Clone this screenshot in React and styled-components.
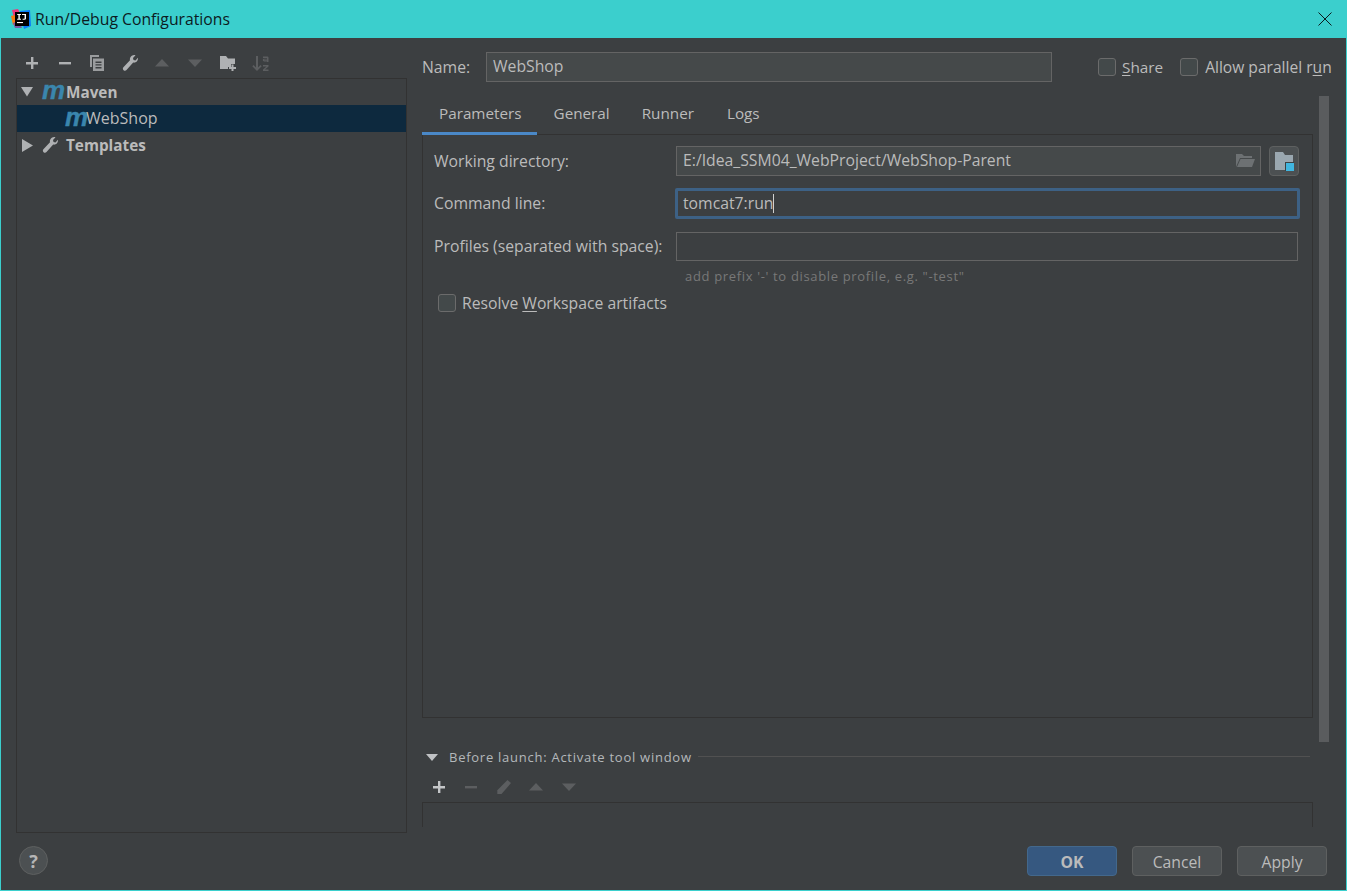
import React from "react";
import styled, { createGlobalStyle } from "styled-components";

const Global = createGlobalStyle`
  html, body { margin: 0; padding: 0; background: #3c3f41; }
  * { box-sizing: border-box; }
  body { font-family: "Open Sans", "Noto Sans", "Liberation Sans", sans-serif; color: #bbbbbb; }
`;

const Win = styled.div`
  width: 1347px; height: 891px; display: flex; flex-direction: column;
  background: #3c3f41; border: 1px solid #3bcfcd; border-top: 0; overflow: hidden;
  font-size: 15.75px; line-height: 20px;
`;
const TitleBar = styled.div`
  height: 38px; flex: none; margin: 0 -1px; padding: 0 15px 0 11px; background: #3bcfcd;
  display: flex; align-items: center; color: #0c1b1f;
`;
const TitleText = styled.span`margin-left: 4px; flex: 1;`;
const Main = styled.div`flex: none; height: 795px; display: flex;`;
const LeftCol = styled.div`width: 391px; margin-left: 15px; flex: none; display: flex; flex-direction: column;`;
const Toolbar = styled.div`
  display: flex; align-items: center; flex: none; height: ${p => p.$h}px;
  padding: ${p => p.$pt || 0}px 0 0 ${p => p.$pl}px; margin-top: ${p => p.$mt || 0}px; gap: ${p => p.$gap}px;
`;
const IconSlot = styled.span`width: 16px; height: 16px; display: block; flex: none; svg { display: block; }`;
const Tree = styled.div`flex: 1; border: 1px solid #323232; display: flex; flex-direction: column;`;
const TreeRow = styled.div`
  height: ${p => p.$h}px; display: flex; align-items: center; flex: none;
  padding-left: ${p => p.$pl}px; padding-bottom: 1px; background: ${p => (p.$sel ? "#0d293e" : "transparent")};
  font-weight: ${p => (p.$bold ? 700 : 400)}; font-size: ${p => (p.$bold ? "15.3px" : "16px")};
`;
const Mvn = styled.span`
  font-family: "Liberation Sans", sans-serif; font-style: italic; font-weight: 700;
  font-size: 26px; line-height: 20px; color: #3a86ad; width: ${p => p.$w}px; flex: none; margin-top: -3px;
  -webkit-text-stroke: 0.4px #3a86ad;
`;
const TreeGap = styled.span`width: ${p => p.$w}px; flex: none;`;
const RightCol = styled.div`width: 907px; margin-left: 15px; flex: none; display: flex; flex-direction: column; position: relative;`;
const NameRow = styled.div`display: flex; align-items: center; height: 30px; margin-top: 14px; flex: none;`;
const NameLabel = styled.span`width: 64px; flex: none; margin-top: -1px;`;
const Input = styled.div`
  height: ${p => p.$h || 29}px; width: ${p => p.$w}px; flex: none;
  background: ${p => (p.$filled ? "#45494a" : "#3c3f41")};
  border: 1px solid #646464; padding: 0 ${p => p.$pr || 6}px 2px 6px;
  display: flex; align-items: center; justify-content: space-between; white-space: nowrap;
`;
const FocusInput = styled.div`
  width: 625px; height: 31px; flex: none; margin-left: -1px; border: 3px solid #3d6185;
  border-radius: 2px; display: flex; align-items: center; padding: 0 0 2px 5px; white-space: nowrap;
`;
const Caret = styled.span`width: 1px; height: 19px; background: #d0d0d0; display: block; margin-top: 2px;`;
const CheckGroup = styled.label`
  display: flex; align-items: center; margin-left: ${p => p.$ml}px; flex: none; font-size: ${p => p.$fs}px;
`;
const Box = styled.span`
  width: 18px; height: 18px; border: 1px solid #6b6b6b; border-radius: 3px; background: #43494a;
  margin-right: ${p => p.$mr || 6}px; flex: none; display: block;
`;
const U = styled.span`text-decoration: underline; text-underline-offset: 2px;`;
const Tabs = styled.div`display: flex; height: 38px; margin-top: 15px; flex: none; font-size: 15.25px;`;
const Tab = styled.div`
  padding: 0 ${p => p.$pr}px 3px ${p => p.$pl}px; height: 38px; display: flex; align-items: center;
  border-bottom: 3px solid ${p => (p.$on ? "#4a88c7" : "transparent")}; z-index: 1;
`;
const Panel = styled.div`
  width: 891px; height: 584px; flex: none; margin-top: -1px; border: 1px solid #323232;
  padding: 11px 13px 0 11px; display: flex; flex-direction: column;
`;
const FieldRow = styled.div`display: flex; align-items: center; height: ${p => p.$h}px; flex: none; margin-top: ${p => p.$mt || 0}px;`;
const FieldLabel = styled.span`width: 242px; flex: none; margin-top: -1px;`;
const BrowseBtn = styled.div`
  width: 30px; height: 30px; margin-left: 8px; flex: none; background: #4c5052;
  border: 1px solid #5e6060; border-radius: 4px; display: flex; align-items: center; justify-content: center;
`;
const Hint = styled.div`margin: 5px 0 0 251px; font-size: 13px; height: 20px; color: #787878; letter-spacing: .66px; flex: none;`;
const ResolveRow = styled.div`display: flex; align-items: center; margin: 7px 0 0 4px; height: 20px; flex: none;`;
const Scrollbar = styled.div`position: absolute; left: 897px; top: 58px; width: 10px; height: 646px; background: #5a5c5e;`;
const LaunchHead = styled.div`display: flex; align-items: center; height: 20px; margin-top: 29px; padding-left: 4px; flex: none;`;
const LaunchText = styled.span`margin-left: 11px; font-size: 13px; letter-spacing: .74px; color: #b4b8bb; flex: none;`;
const Rule = styled.div`flex: none; width: 612px; height: 1px; background: #515151; margin: -2px 0 0 6px;`;
const LaunchBox = styled.div`
  width: 891px; height: 25px; flex: none; margin-top: 1px; border: 1px solid #323232; border-bottom: 0;
`;
const Footer = styled.div`flex: 1; display: flex; align-items: flex-start; padding: 13px 19px 0 18px;`;
const Help = styled.div`
  width: 29px; height: 29px; border-radius: 50%; background: #4c5052; border: 1px solid #5e6060;
  display: flex; align-items: center; justify-content: center; font-weight: 700; font-size: 18px; color: #b6b6b6; flex: none;
`;
const Spacer = styled.div`flex: 1;`;
const Btn = styled.div`
  width: 90px; height: 30px; margin-left: ${p => p.$ml || 0}px; border-radius: 4px; flex: none; padding-top: 1px;
  background: ${p => (p.$primary ? "#365880" : "#4c5052")};
  border: 1px solid ${p => (p.$primary ? "#43688c" : "#5e6060")};
  color: #bbbbbb; font-weight: ${p => (p.$primary ? 700 : 400)};
  display: flex; align-items: center; justify-content: center;
`;
const WrenchInline = styled.span`margin: 0 6px 0 9px; display: block; flex: none; svg { display: block; }`;

const Ic = ({ children, w = 16, h = 16 }) => (
  <IconSlot><svg width={w} height={h} viewBox={`0 0 ${w} ${h}`}>{children}</svg></IconSlot>
);
const Plus = ({ c = "#afb1b3" }) => <Ic><path d="M7 2h2.400v5H14v2.400H9.400V14H7V9.400H2V7h5z" fill={c} /></Ic>;
const Minus = ({ c = "#afb1b3" }) => <Ic><rect x="2" y="7" width="12" height="2.400" fill={c} /></Ic>;
const Up = ({ c = "#5c5e60" }) => <Ic><path d="M8 4l7 7.500H1z" fill={c} /></Ic>;
const Down = ({ c = "#5c5e60" }) => <Ic><path d="M1 4.500h14L8 12z" fill={c} /></Ic>;
const Copy = () => (
  <Ic>
    <path d="M1 0h9v2H3v10H1z" fill="#9a9c9e" />
    <path d="M4 3.500h11V16H4z" fill="#9a9c9e" />
    <path d="M6.500 6.500h6v1.400h-6zM6.500 9.200h6v1.400h-6zM6.500 12h6v1.400h-6z" fill="#3c3f41" />
  </Ic>
);
const Wrench = ({ c = "#afb1b3" }) => (
  <Ic>
    <path d="M16 3.600c0 2.500-2.200 4.500-4.800 4l-6.700 7.500c-.8.800-2 .900-2.900.1-.9-.8-1-2.100-.2-3L8 5.300C7.400 2.700 9.400.2 12.100 0c.5 0 1 0 1.400.2L11 3l.5 2 2 .5 2.400-2.700z" fill={c} />
  </Ic>
);
const Pencil = () => (
  <Ic>
    <path d="M11.500 1l3.500 3L5.500 15H1.300v-3.800z" fill="#5c5e60" />
  </Ic>
);
const FolderAdd = () => (
  <Ic w={19} h={16}>
    <path d="M0 1h6l2 2.500h7V9h-4v3H8v2H0z" fill="#afb1b3" />
    <path d="M11.500 9.500h2v2.500H16v2h-2.500v2h-2v-2H9v-2h2.500z" fill="#afb1b3" />
  </Ic>
);
const Sort = () => (
  <IconSlot>
    <svg width="18" height="18" viewBox="0 0 18 18">
      <path d="M4 1h2v11.500l2.500-2.500 1.200 1.200L5 16 .3 11.200 1.500 10 4 12.500z" fill="#5c5e60" />
      <path d="M11 1.500h4.200c.8 0 1.300.5 1.300 1.200V7H15v-.5h-2.700c-1 0-1.500-.6-1.500-1.400 0-.9.600-1.400 1.500-1.400H15v-.6h-4zM12.300 5.300H15v-.8h-2.700zM11 10h5.500v1.400l-3.500 3.200h3.500V16H11v-1.400l3.500-3.200H11z" fill="#5c5e60" />
    </svg>
  </IconSlot>
);
const OpenFolder = () => (
  <svg width="19" height="15" viewBox="0 0 19 15">
    <path d="M0 1h6l2 2h8v2H4L0 14z" fill="#6d7173" />
    <path d="M4.500 6H19l-3 8H1z" fill="#6d7173" />
  </svg>
);
const VarFolder = () => (
  <svg width="20" height="20" viewBox="0 0 20 20">
    <path d="M1 1h8l2 3h8v15H1z" fill="#9aa7b0" />
    <rect x="11" y="11" width="9" height="9" fill="#3c4143" />
    <rect x="12" y="12" width="8" height="8" fill="#40b6e0" />
  </svg>
);
const Logo = () => (
  <svg width="20" height="20" viewBox="0 0 20 20">
    <path d="M1 1l6-1 3 6-7 3z" fill="#f0377b" />
    <path d="M0 7l4-1 1 8-3 2z" fill="#f97a12" />
    <path d="M9 2l10-1 1 16-7 3z" fill="#087cfa" />
    <path d="M2 14l6-2 3 7-7 0z" fill="#7c59a4" />
    <rect x="4" y="3" width="14" height="14" fill="#000" />
    <path d="M6.200 5h3.800v1H8.800v3.700H10v1H6.200v-1h1.200V6H6.200zM11 5h4v4.600c0 .8-.6 1.200-1.400 1.200h-2v-1.100h1.600c.2 0 .4-.1.400-.4V6h-2.600z" fill="#fff" />
    <rect x="6" y="13" width="6" height="1.100" fill="#fff" />
  </svg>
);
const Close = () => (
  <svg width="14" height="14" viewBox="0 0 14 14">
    <path d="M.5.500l13 13M13.500.500l-13 13" stroke="#0c1b1f" strokeWidth="1" fill="none" />
  </svg>
);
const TriDown = () => <svg width="14" height="11" viewBox="0 0 14 11"><path d="M1 1h12L7 10.500z" fill="#afb1b3" /></svg>;
const TriRight = () => <svg width="11" height="13" viewBox="0 0 11 13"><path d="M0 0l11 6.500L0 13z" fill="#afb1b3" /></svg>;
const TriSmall = () => <svg width="12" height="7" viewBox="0 0 12 7"><path d="M0 0h12L6 7z" fill="#c0c2c4" /></svg>;

export default function App() {
  return (
    <Win>
      <Global />
      <TitleBar>
        <Logo />
        <TitleText>Run/Debug Configurations</TitleText>
        <Close />
      </TitleBar>
      <Main>
        <LeftCol>
          <Toolbar $h={40} $pt={10} $pl={8} $gap={16.6}>
            <Plus /><Minus /><Copy /><Wrench /><Up /><Down /><FolderAdd /><Sort />
          </Toolbar>
          <Tree>
            <TreeRow $h={26} $pl={3} $bold>
              <TriDown /><TreeGap $w={8} />
              <Mvn $w={24}>m</Mvn>Maven
            </TreeRow>
            <TreeRow $h={27} $pl={48} $sel>
              <Mvn $w={21}>m</Mvn>WebShop
            </TreeRow>
            <TreeRow $h={27} $pl={5} $bold>
              <TriRight />
              <WrenchInline><Wrench /></WrenchInline>
              <TreeGap $w={2} />Templates
            </TreeRow>
          </Tree>
        </LeftCol>
        <RightCol>
          <NameRow>
            <NameLabel>Name:</NameLabel>
            <Input $w={566} $h={30} $filled>WebShop</Input>
            <CheckGroup $ml={46} $fs={15.3}><Box /><U>S</U>hare</CheckGroup>
            <CheckGroup $ml={17} $fs={15.6}><Box $mr={7} />Allow parallel r<U>u</U>n</CheckGroup>
          </NameRow>
          <Scrollbar />
          <Tabs>
            <Tab $on $pl={17} $pr={15}>Parameters</Tab>
            <Tab $pl={17} $pr={16}>General</Tab>
            <Tab $pl={16} $pr={16}>Runner</Tab>
            <Tab $pl={17} $pr={17}>Logs</Tab>
          </Tabs>
          <Panel>
            <FieldRow $h={30}>
              <FieldLabel>Working directory:</FieldLabel>
              <Input $w={585} $h={30} $filled $pr={5}>
                E:/Idea_SSM04_WebProject/WebShop-Parent
                <OpenFolder />
              </Input>
              <BrowseBtn><VarFolder /></BrowseBtn>
            </FieldRow>
            <FieldRow $h={31} $mt={12}>
              <FieldLabel>Command line:</FieldLabel>
              <FocusInput>tomcat7:run<Caret /></FocusInput>
            </FieldRow>
            <FieldRow $h={29} $mt={13}>
              <FieldLabel>Profiles (separated with space):</FieldLabel>
              <Input $w={622} $h={29} />
            </FieldRow>
            <Hint>add prefix '-' to disable profile, e.g. "-test"</Hint>
            <ResolveRow>
              <Box />
              Resolve&nbsp;<U>W</U>orkspace artifacts
            </ResolveRow>
          </Panel>
          <LaunchHead>
            <TriSmall />
            <LaunchText>Before launch: Activate tool window</LaunchText>
            <Rule />
          </LaunchHead>
          <Toolbar $h={29} $pl={9} $gap={16.4} $mt={5}>
            <Plus c="#c4c6c8" /><Minus c="#5c5e60" /><Pencil /><Up /><Down />
          </Toolbar>
          <LaunchBox />
        </RightCol>
      </Main>
      <Footer>
        <Help>?</Help>
        <Spacer />
        <Btn $primary>OK</Btn>
        <Btn $ml={15}>Cancel</Btn>
        <Btn $ml={15}>Apply</Btn>
      </Footer>
    </Win>
  );
}
